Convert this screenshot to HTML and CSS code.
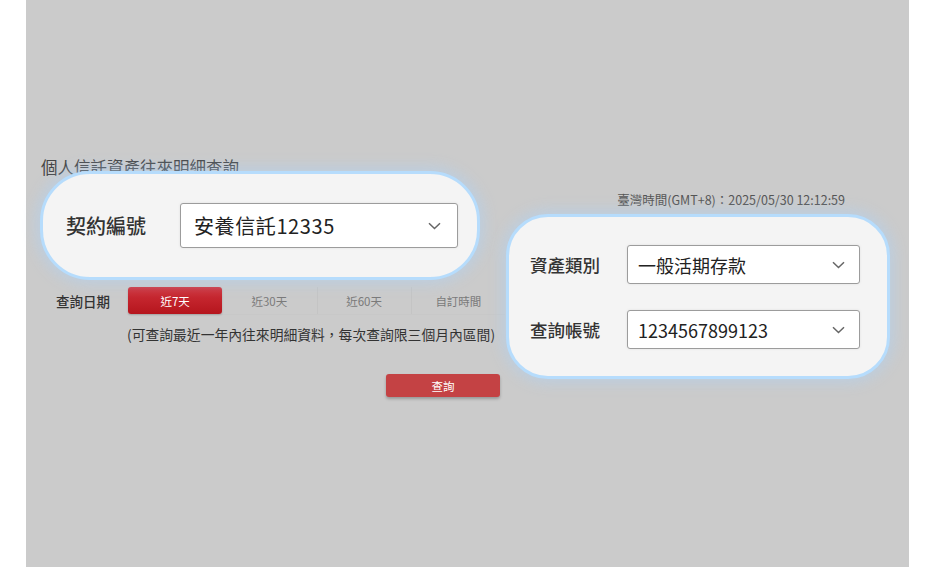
FILE: index.html
```html
<!DOCTYPE html>
<html lang="zh-Hant">
<head>
  <meta charset="UTF-8">
  <meta name="viewport" content="width=device-width, initial-scale=1.0">
  <title>個人信託資產往來明細查詢</title>
  <link rel="stylesheet" href="styles.css">
</head>
<body>
  <div class="screen">
    <div class="content">
      <h2 class="page-title">個人信託資產往來明細查詢</h2>
      <div class="clock">臺灣時間(GMT+8)：2025/05/30 12:12:59</div>
      <div class="date-row">
        <span class="date-label">查詢日期</span>
        <div class="tabs">
          <button class="tab active">近7天</button>
          <button class="tab">近30天</button>
          <button class="tab">近60天</button>
          <button class="tab">自訂時間</button>
        </div>
      </div>
      <p class="note">(可查詢最近一年內往來明細資料，每次查詢限三個月內區間)</p>
      <div class="actions">
        <button class="btn-query">查詢</button>
      </div>
    </div>

    <!-- highlighted fields -->
    <div class="spot spot-contract">
      <div class="field">
        <span class="field-label">契約編號</span>
        <div class="select select-lg">
          <span>安養信託12335</span>
          <svg class="chevron" width="13" height="8" viewBox="0 0 13 8"><path d="M1 1.2l5.5 5.3 5.5-5.3" fill="none" stroke="#666" stroke-width="1.5"/></svg>
        </div>
      </div>
    </div>

    <div class="spot spot-asset">
      <div class="field">
        <span class="field-label">資產類別</span>
        <div class="select">
          <span>一般活期存款</span>
          <svg class="chevron" width="13" height="8" viewBox="0 0 13 8"><path d="M1 1.2l5.5 5.3 5.5-5.3" fill="none" stroke="#666" stroke-width="1.5"/></svg>
        </div>
      </div>
      <div class="field">
        <span class="field-label">查詢帳號</span>
        <div class="select">
          <span>1234567899123</span>
          <svg class="chevron" width="13" height="8" viewBox="0 0 13 8"><path d="M1 1.2l5.5 5.3 5.5-5.3" fill="none" stroke="#666" stroke-width="1.5"/></svg>
        </div>
      </div>
    </div>
  </div>
</body>
</html>
```

FILE: styles.css
```css
body {
  margin: 0;
  padding: 0;
  background-color: #ffffff;
  font-family: "Noto Sans CJK TC", "Noto Sans", sans-serif;
  overflow: hidden;
}

.screen {
  position: relative;
  width: 883px;
  height: 567px;
  margin-left: 26px;
  background-color: #cbcbcb;
}

.content {
  padding: 157px 64px 0 15px;
}

.page-title {
  margin: 0;
  font-size: 16.5px;
  font-weight: 400;
  line-height: 20px;
  color: #444;
}

.clock {
  margin-top: 15px;
  font-size: 12.5px;
  line-height: 16px;
  color: #555;
  text-align: right;
}

.date-row {
  display: flex;
  align-items: center;
  margin-top: 79px;
  margin-left: 15px;
}

.date-label {
  width: 72px;
  font-size: 13.5px;
  font-weight: 500;
  color: #333;
}

.tabs {
  display: flex;
  width: 377px;
  border-bottom: 1px solid #c8c8c8;
}

.tab {
  width: 94.25px;
  height: 27px;
  padding: 0;
  border: none;
  border-left: 1px solid #c4c4c4;
  background: none;
  font-family: inherit;
  font-size: 11.5px;
  color: #7a7a7a;
}

.tab:nth-child(2) {
  border-left: none;
}

.tab.active {
  border-left: none;
  border-radius: 3px;
  background: linear-gradient(#d0313a, #b5151d);
  color: #ffffff;
  box-shadow: 0 1px 2px rgba(0, 0, 0, 0.2);
}

.note {
  margin: 9px 0 0 86px;
  font-size: 13.8px;
  line-height: 20px;
  color: #333;
}

.actions {
  display: flex;
  justify-content: flex-end;
  width: 373px;
  margin: 30px 0 0 86px;
}

.btn-query {
  width: 114px;
  height: 23px;
  padding: 0;
  border: none;
  border-radius: 3px;
  background-color: #c44244;
  color: #ffffff;
  font-family: inherit;
  font-size: 11.5px;
  box-shadow: 0 2px 3px rgba(0, 0, 0, 0.25);
}

.spot {
  position: absolute;
  box-sizing: border-box;
  border: 3px solid #b6dcfc;
  background-color: #f4f4f4;
  box-shadow: 0 0 14px 4px rgba(170, 210, 250, 0.45);
}

.spot-contract {
  left: 14px;
  top: 171px;
  width: 440px;
  height: 109px;
  border-radius: 50px;
  display: flex;
  align-items: center;
  padding-left: 23px;
}

.spot-asset {
  left: 480px;
  top: 214px;
  width: 384px;
  height: 165px;
  border-radius: 42px;
  display: flex;
  flex-direction: column;
  gap: 26px;
  padding: 28px 0 0 21px;
}

.field {
  display: flex;
  align-items: center;
}

.field-label {
  width: 97px;
  font-size: 17.5px;
  font-weight: 500;
  color: #333;
}

.spot-contract .field-label {
  width: 114px;
  font-size: 20px;
}

.select {
  display: flex;
  align-items: center;
  justify-content: space-between;
  box-sizing: border-box;
  width: 233px;
  height: 39px;
  padding: 0 14px 0 10px;
  border: 1.5px solid #9c9c9c;
  border-radius: 3px;
  background-color: #ffffff;
  font-size: 18px;
  color: #222;
  box-shadow: 0 0 3px rgba(0, 0, 0, 0.08);
}

.select-lg {
  width: 278px;
  height: 45px;
  padding: 0 16px 0 13px;
  font-size: 20px;
  letter-spacing: 0.6px;
}

.chevron {
  display: block;
}
```
